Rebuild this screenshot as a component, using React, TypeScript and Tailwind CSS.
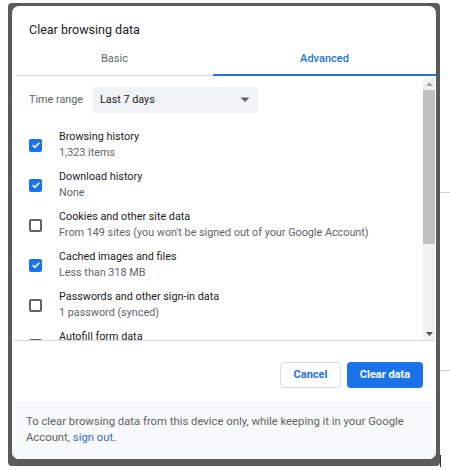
import { useState } from "react"

const items = [
  { title: "Browsing history", sub: "1,323 items", checked: true },
  { title: "Download history", sub: "None", checked: true },
  { title: "Cookies and other site data", sub: "From 149 sites (you won't be signed out of your Google Account)", checked: false },
  { title: "Cached images and files", sub: "Less than 318 MB", checked: true },
  { title: "Passwords and other sign-in data", sub: "1 password (synced)", checked: false },
  { title: "Autofill form data", sub: "", checked: false },
]

function Checkbox({ checked }: { checked: boolean }) {
  if (checked) {
    return (
      <div className="flex h-[13px] w-[13px] shrink-0 items-center justify-center rounded-[2px] bg-[#1a73e8]">
        <svg width="10" height="10" viewBox="0 0 10 10" fill="none">
          <path d="M1.8 5.2 L4 7.3 L8.3 2.8" stroke="white" strokeWidth="1.6" />
        </svg>
      </div>
    )
  }
  return <div className="h-[13px] w-[13px] shrink-0 rounded-[2px] border-2 border-[#5f6368]" />
}

export default function App() {
  const [tab, setTab] = useState("advanced")

  return (
    <div className="relative h-[470px] w-[450px] bg-white" style={{ fontFamily: "Roboto, 'Liberation Sans', sans-serif" }}>
      {/* page bits behind the dialog */}
      <div className="absolute left-[440px] top-[192px] h-px w-[10px] bg-[#d0d0d0]" />
      <div className="absolute left-[440px] top-[370px] h-px w-[10px] bg-[#d0d0d0]" />
      <div className="absolute left-[440px] top-[455px] h-[12px] w-px bg-[#333]" />

      <div className="absolute left-[8px] top-[3px] h-[463px] w-[432px] rounded-[4px] bg-[#5b5b5b] pb-[7px] pl-[4px] pr-[4px] pt-[3px]">
        <div className="flex h-full flex-col overflow-hidden rounded-[7px] bg-white">
          <div className="pl-[17px] pt-[14px] text-[12.5px] leading-[20px] text-[#202124]">Clear browsing data</div>

          {/* Tabs */}
          <div className="ml-[4px] flex h-[36px] border-b border-[#dadce0] text-[11px]">
            <button
              onClick={() => setTab("basic")}
              className={"relative flex w-[197px] items-center justify-center pt-[3px] " + (tab === "basic" ? "text-[#1a73e8]" : "text-[#5f6368]")}
            >
              Basic
              {tab === "basic" && <div className="absolute -bottom-px left-0 right-0 h-[2px] bg-[#1a73e8]" />}
            </button>
            <button
              onClick={() => setTab("advanced")}
              className={"relative flex flex-1 items-center justify-center pt-[3px] font-medium " + (tab === "advanced" ? "text-[#1a73e8]" : "text-[#5f6368]")}
            >
              Advanced
              {tab === "advanced" && <div className="absolute -bottom-px left-0 right-0 h-[2px] bg-[#1a73e8]" />}
            </button>
          </div>

          {/* Scrollable list */}
          <div className="flex h-[265px] border-b border-[#dadce0]">
            <div className="flex-1 overflow-hidden">
              <div className="flex items-center pl-[17px] pt-[11px]">
                <span className="w-[64px] text-[10.8px] text-[#5f6368]">Time range</span>
                <div className="flex h-[26px] w-[165px] items-center justify-between rounded-[4px] bg-[#f1f3f4] pl-[7px] pr-[8px] text-[10.8px] text-[#202124]">
                  <span>Last 7 days</span>
                  <svg width="10" height="6" viewBox="0 0 10 6">
                    <path d="M0.5 0.5 L9.5 0.5 L5 5 Z" fill="#5f6368" />
                  </svg>
                </div>
              </div>
              <div className="mt-[12px]">
                {items.map((it) => (
                  <div key={it.title} className="flex h-[40px] items-center pl-[17px]">
                    <Checkbox checked={it.checked} />
                    <div className="ml-[17px] text-[10.8px] leading-[16px]">
                      <div className="text-[#202124]">{it.title}</div>
                      <div className="text-[#5f6368]">{it.sub || "\u00a0"}</div>
                    </div>
                  </div>
                ))}
              </div>
            </div>
            {/* scrollbar */}
            <div className="mr-px mt-[2px] flex w-[12px] flex-col bg-[#f1f1f1]">
              <div className="flex h-[12px] items-center justify-center">
                <svg width="7" height="4" viewBox="0 0 7 4">
                  <path d="M0 4 L7 4 L3.5 0 Z" fill="#a3a3a3" />
                </svg>
              </div>
              <div className="h-[154px] bg-[#c1c1c1]" />
              <div className="flex-1" />
              <div className="flex h-[12px] items-center justify-center">
                <svg width="7" height="4" viewBox="0 0 7 4">
                  <path d="M0 0 L7 0 L3.5 4 Z" fill="#505050" />
                </svg>
              </div>
            </div>
          </div>

          {/* Buttons */}
          <div className="flex justify-end gap-[6px] pb-[13px] pr-[13px] pt-[21px] text-[11px] font-bold">
            <button className="h-[26px] w-[61px] rounded-[4px] border border-[#dadce0] bg-white text-[#1a73e8]">Cancel</button>
            <button className="h-[26px] w-[76px] rounded-[4px] bg-[#1a73e8] text-white">Clear data</button>
          </div>

          {/* Footer */}
          <div className="flex-1 bg-[#f8f9fa] px-[14px] pt-[13px] text-[11.3px] leading-[16px] text-[#5f6368]">
            <p className="max-w-[380px]">
              To clear browsing data from this device only, while keeping it in your Google Account,{" "}
              <a className="text-[#3b6bc4]">sign out</a>.
            </p>
          </div>
        </div>
      </div>
    </div>
  )
}
